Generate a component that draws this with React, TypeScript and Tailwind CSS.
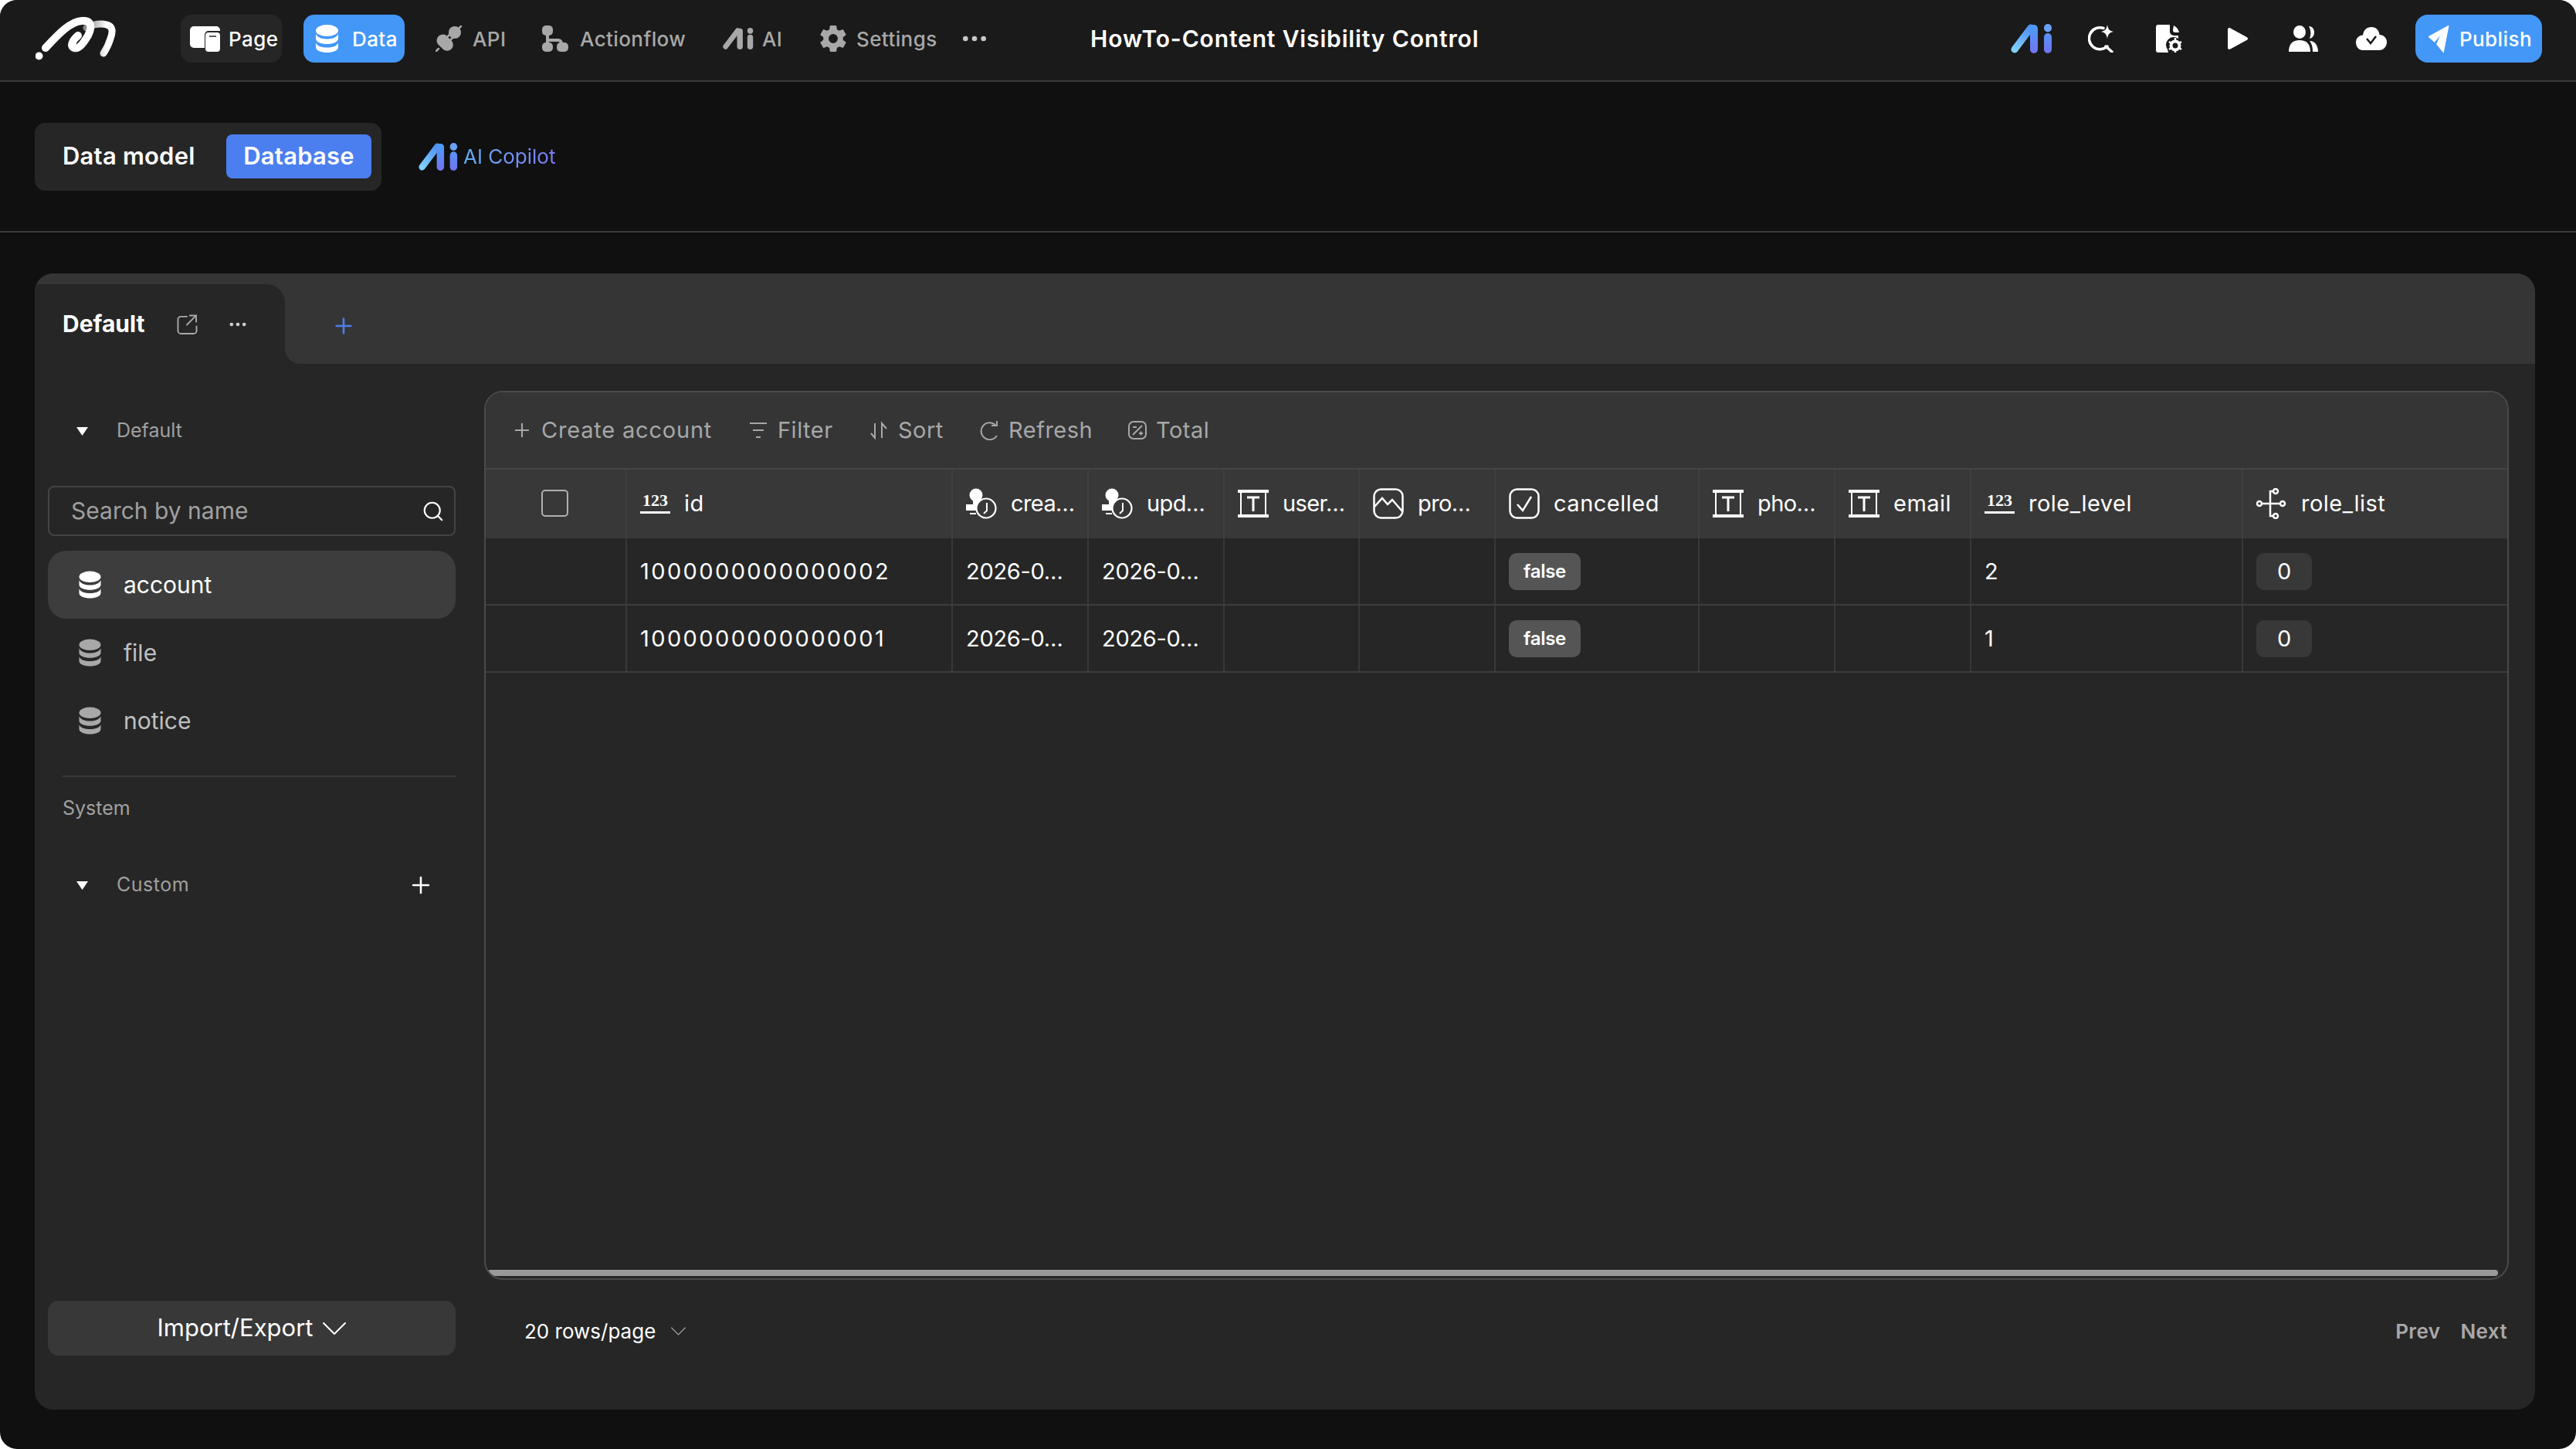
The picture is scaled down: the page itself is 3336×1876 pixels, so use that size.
import React from "react";
import { Plus, Ellipsis, Search } from "lucide-react";
import { IoSettingsSharp } from "react-icons/io5";

// drawn icons, sized from the outside
const DbIcon = ({ className }: { className: string }) => (
    <svg viewBox="0 0 30 36" className={className} fill="currentColor">
        <ellipse cx="15" cy="7.500" rx="14.5" ry="7.500" />
        <path d="M.5 12c2 4.500 8 6.500 14.500 6.500S27.500 16.500 29.500 12v6c0 4.500-7 7-14.500 7S.5 22.500.5 18z" />
        <path d="M.5 23.500c2 4.500 8 6 14.500 6s12.500-1.500 14.500-6V29c0 4.500-7 7-14.500 7S.5 33.500.5 29z" />
    </svg>
);

const AiLogo = ({ className, mono }: { className: string; mono?: boolean }) => (
    <svg viewBox="0 0 54 38" className={className} fill="none" strokeLinecap="round">
        <defs>
            <linearGradient id="aiLeft" gradientUnits="userSpaceOnUse" x1="5" y1="33" x2="26" y2="5">
                <stop offset="0" stopColor="#7fd0fa" />
                <stop offset="1" stopColor="#4f8ff5" />
            </linearGradient>
            <linearGradient id="aiRight" gradientUnits="userSpaceOnUse" x1="0" y1="5" x2="0" y2="33">
                <stop offset="0" stopColor="#4f9bf5" />
                <stop offset="1" stopColor="#6d78f2" />
            </linearGradient>
        </defs>
        <path d="M5 33 L26 5" stroke={mono ? "#a8a8a8" : "url(#aiLeft)"} strokeWidth="9" />
        <path d="M30 6 V33" stroke={mono ? "#a8a8a8" : "url(#aiRight)"} strokeWidth="10" />
        <path d="M48 5 V5.500" stroke={mono ? "#a8a8a8" : "#6aa0f6"} strokeWidth="10" />
        <path d="M48 17 V33" stroke={mono ? "#a8a8a8" : "url(#aiRight)"} strokeWidth="10" />
    </svg>
);

const Logo = () => (
    <svg viewBox="0 0 104 56" className="w-[104px] h-[56px]" fill="none" stroke="#fff" strokeLinecap="round">
        <defs>
            <linearGradient id="archFade" gradientUnits="userSpaceOnUse" x1="66" y1="0" x2="92" y2="0">
                <stop offset="0" stopColor="#8a8a8a" />
                <stop offset="1" stopColor="#fff" />
            </linearGradient>
        </defs>
        <circle cx="4.500" cy="50.500" r="5" fill="#fff" stroke="none" />
        <path d="M66 14 C74 10 84 8 92 10 C101 12 100 20 97 28 C95 35 92 41 88 47" stroke="url(#archFade)" strokeWidth="9" />
        <path d="M13 40 C28 24 44 6 60 5 C72 4 74 12 68 24 C62 34 56 42 50 40 C44 38 48 30 55 24" strokeWidth="10" />
    </svg>
);

const PageIcon = () => (
    <svg viewBox="0 0 39 33" className="w-[39px] h-[33px]" fill="#fff">
        <path d="M5 0h29a5 5 0 0 1 5 5v1H24a5 5 0 0 0-5 5v17H5a5 5 0 0 1-5-5V5a5 5 0 0 1 5-5z" />
        <path d="M24 8h11a4 4 0 0 1 4 4v17a4 4 0 0 1-4 4H24a4 4 0 0 1-4-4V12a4 4 0 0 1 4-4z" />
        <path d="M25 13h9" stroke="#262626" strokeWidth="1.500" />
    </svg>
);

const PlugIcon = () => (
    <svg viewBox="0 0 34 34" className="w-[34px] h-[34px]" fill="#a8a8a8" stroke="#a8a8a8">
        <circle cx="25" cy="9" r="8" stroke="none" />
        <path d="M29 5 L33 1" strokeWidth="2.500" strokeLinecap="round" />
        <path d="M14 13 L21 20 A7.500 7.500 0 0 1 9 30 L5 26 A7.500 7.500 0 0 1 14 13z" stroke="none" />
        <path d="M4 30 L1 33M15 15 L19 11M19 19 L23 15" strokeWidth="2.500" strokeLinecap="round" />
    </svg>
);

const FlowIcon = () => (
    <svg viewBox="0 0 34 34" className="w-[34px] h-[34px]" fill="#a8a8a8">
        <rect x="0" y="0" width="14" height="13" rx="5" />
        <rect x="5" y="12" width="4" height="12" />
        <path d="M7 17h14a6 6 0 0 1 6 6v2h-4v-2a2 2 0 0 0-2-2H7z" />
        <rect x="0" y="22" width="14" height="12" rx="5" />
        <rect x="19" y="22" width="15" height="12" rx="5" />
    </svg>
);

const SparkSearch = () => (
    <svg viewBox="0 0 34 36" className="w-[34px] h-[36px]" fill="none" stroke="#fff">
        <path d="M20 4.500 A14 14 0 1 0 25 28" strokeWidth="3.500" strokeLinecap="round" />
        <path d="M23 28 L31 35" strokeWidth="3.500" strokeLinecap="round" />
        <path d="M25 0 C26 6 28 8 33 9 C28 10 26 12 25 18 C24 12 22 10 17 9 C22 8 24 6 25 0z" fill="#fff" stroke="none" />
    </svg>
);

const FileGear = () => (
    <svg viewBox="0 0 34 36" className="w-[34px] h-[36px]" fill="#fff">
        <path d="M3 0h15v9a5 5 0 0 0 5 5h6v4a10 10 0 0 0-14 14l1 4H3a3 3 0 0 1-3-3V3a3 3 0 0 1 3-3z" />
        <path d="M23 1c4 2 6 5 7 9h-5a3 3 0 0 1-3-3z" />
        <circle cx="25" cy="27" r="5.500" fill="none" stroke="#fff" strokeWidth="4" />
        <path d="M25 17v4M25 33v3M17 22l3 2M30 30l3 2M17 32l3-2M30 24l3-2" stroke="#fff" strokeWidth="2.500" />
    </svg>
);

const PlayIcon = () => (
    <svg viewBox="0 0 28 30" className="w-[28px] h-[30px]" fill="#fff" stroke="#fff" strokeWidth="4" strokeLinejoin="round">
        <path d="M3 3 L25 15 L3 27z" />
    </svg>
);

const UsersIcon = () => (
    <svg viewBox="0 0 38 34" className="w-[38px] h-[34px]" fill="#fff">
        <ellipse cx="14" cy="8.500" rx="8" ry="8.500" />
        <path d="M26 1c5 0 7 4 7 8s-2 7-6 8c2-5 2-11-1-16z" />
        <path d="M0 34c0-10 5-15 14-15s14 5 14 15z" />
        <path d="M27 20c7 0 11 6 11 14h-7c0-6-1-10-4-14z" />
    </svg>
);

const CloudCheck = () => (
    <svg viewBox="0 0 40 30" className="w-[40px] h-[30px]">
        <path fill="#fff" d="M20 0c6 0 10 4 10.500 10 5 0 9.500 4 9.500 9.500S36 30 30 30H9c-5 0-9-4-9-10s4-9 9-9.500C10 4 14 0 20 0z" />
        <path d="M14 15l5 6 7-9" fill="none" stroke="#1a1a1a" strokeWidth="2.500" />
    </svg>
);

const PublishIcon = () => (
    <svg viewBox="0 0 28 36" className="w-[27px] h-[35px]" fill="#fff">
        <path d="M27 0 L0 15 L8 22 L17 11 L11 25 L20 36z" stroke="#fff" strokeWidth="1" strokeLinejoin="round" />
    </svg>
);

const ExternalIcon = () => (
    <svg viewBox="0 0 27 27" className="w-[27px] h-[26px]" fill="none" stroke="#a8a8a8" strokeWidth="2" strokeLinecap="round">
        <path d="M13 3H5a4 4 0 0 0-4 4v15a4 4 0 0 0 4 4h17a4 4 0 0 0 4-4v-6" />
        <path d="M13 14 L25 2 M17 1.500h8.500V10" />
    </svg>
);

const Chevron = ({ className }: { className: string }) => (
    <svg viewBox="0 0 30 16" className={className} fill="none" stroke="currentColor" strokeWidth="2" strokeLinecap="round">
        <path d="M1 1 L15 15 L29 1" />
    </svg>
);

const FilterIcon = () => (
    <svg viewBox="0 0 24 24" className="w-[24px] h-[24px]" fill="none" stroke="#a8a8a8" strokeWidth="2">
        <path d="M1 3h22M5 12h14M9 21h6" />
    </svg>
);

const SortIcon = () => (
    <svg viewBox="0 0 24 24" className="w-[24px] h-[24px]" fill="none" stroke="#a8a8a8" strokeWidth="2">
        <path d="M7 3v19l-5-6M16 22V3l6 7" />
    </svg>
);

const RefreshIcon = () => (
    <svg viewBox="0 0 24 26" className="w-[24px] h-[26px]" fill="none" stroke="#a8a8a8" strokeWidth="2">
        <path d="M20 6A11 11 0 1 0 22 20" />
        <path d="M15 7h7V1" />
    </svg>
);

const TotalIcon = () => (
    <svg viewBox="0 0 24 24" className="w-[24px] h-[24px]" fill="none" stroke="#a8a8a8" strokeWidth="2">
        <rect x="1" y="1" width="22" height="22" rx="6" />
        <path d="M6 18 L18 6M6 8h5M14 16h5M16.500 13.500v5" />
    </svg>
);

const TimeIcon = () => (
    <svg viewBox="0 0 40 40" className="w-[40px] h-[40px] shrink-0" fill="none" stroke="#fff">
        <circle cx="13" cy="9" r="8.500" fill="#fff" stroke="none" />
        <path d="M9 15h9v6h-3v8H0v-8h9z" fill="#fff" stroke="none" />
        <rect x="5" y="32" width="8" height="2" fill="#fff" stroke="none" />
        <circle cx="26" cy="26" r="12.500" fill="#383838" strokeWidth="2.200" />
        <path d="M27 19v10l-4 4" strokeWidth="2" />
    </svg>
);

const TextIcon = () => (
    <svg viewBox="0 0 40 40" className="w-[40px] h-[40px] shrink-0" fill="none" stroke="#fff" strokeWidth="2">
        <path d="M0 4h40M0 36h40" strokeWidth="4" />
        <path d="M4 4v32M36 4v32" />
        <path d="M12 12h16M20 12v18" strokeWidth="3" />
    </svg>
);

const ImageIcon = () => (
    <svg viewBox="0 0 40 40" className="w-[40px] h-[40px] shrink-0" fill="none" stroke="#fff" strokeWidth="2.500">
        <rect x="1.500" y="1.500" width="37" height="37" rx="9" />
        <path d="M2 24 L12 13 L19 21 L25 15 L38 30" />
    </svg>
);

const CheckIcon = () => (
    <svg viewBox="0 0 40 40" className="w-[40px] h-[40px] shrink-0" fill="none" stroke="#fff" strokeWidth="2.500">
        <rect x="1.500" y="1.500" width="37" height="37" rx="9" />
        <path d="M11 21 L18 29 L29 11" />
    </svg>
);

const LinkIcon = () => (
    <svg viewBox="0 0 40 40" className="w-[40px] h-[40px] shrink-0" fill="none" stroke="#fff" strokeWidth="2.500">
        <circle cx="4" cy="20" r="3" />
        <circle cx="25" cy="4" r="3" />
        <circle cx="25" cy="36" r="3" />
        <circle cx="34" cy="20" r="3" />
        <path d="M7 20h24M22 4h-4v32h4" />
    </svg>
);

const NumIcon = () => (
    <span className="flex flex-col items-center w-[39px] shrink-0">
        <span className="font-['Liberation_Serif',serif] font-bold text-[22px] leading-[20px] tracking-normal text-white">123</span>
        <span className="block w-[39px] h-[3px] mt-[4px] bg-white" />
    </span>
);

const Triangle = () => (
    <svg viewBox="0 0 15 11" className="w-[15px] h-[11px]" fill="#fff">
        <path d="M0 0h15L7.500 11z" />
    </svg>
);

const columns = [
    { label: "", icon: null },
    { label: "id", icon: <NumIcon /> },
    { label: "crea…", icon: <TimeIcon /> },
    { label: "upd…", icon: <TimeIcon /> },
    { label: "user…", icon: <TextIcon /> },
    { label: "pro…", icon: <ImageIcon /> },
    { label: "cancelled", icon: <CheckIcon /> },
    { label: "pho…", icon: <TextIcon /> },
    { label: "email", icon: <TextIcon /> },
    { label: "role_level", icon: <NumIcon /> },
    { label: "role_list", icon: <LinkIcon /> },
];

const rows = [
    { id: "1000000000000002", level: "2" },
    { id: "1000000000000001", level: "1" },
];

const gridCols = "grid grid-cols-[183px_422px_176px_176px_175px_176px_264px_176px_176px_352px_342px]";

const Cell = ({ children, last }: { children?: React.ReactNode; last?: boolean }) => (
    <div className={`flex items-center pl-[17px] pt-[1px] text-white text-[29px] tracking-[-0.3px] ${last ? "" : "border-r-2 border-[#383838]"}`}>
        {children}
    </div>
);

const Badge = ({ children }: { children: React.ReactNode }) => (
    <span className="flex items-center justify-center w-[93px] h-[48px] rounded-[10px] bg-[#555] text-white text-[24px] font-semibold">
        {children}
    </span>
);

export default function App() {
    return (
        <div className="w-[3336px] h-[1876px] bg-white">
            <div className="w-full h-full flex flex-col rounded-[22px] overflow-hidden bg-[#101010] font-['Inter',sans-serif] text-white">
                {/* top nav */}
                <header className="h-[106px] shrink-0 flex items-center pb-[4px] bg-[#1a1a1a] border-b-2 border-[#3a3a3a] text-[26px] font-medium tracking-[0.4px]">
                    <div className="ml-[46px] mr-[84px]">
                        <Logo />
                    </div>
                    <div className="w-[131px] h-[62px] flex items-center gap-[11px] pl-[12px] rounded-[14px] bg-[#262626]">
                        <PageIcon />
                        Page
                    </div>
                    <div className="ml-[28px] w-[131px] h-[62px] flex items-center gap-[16px] pl-[14px] rounded-[14px] bg-[#4397f7]">
                        <DbIcon className="w-[33px] h-[36px] text-white" />
                        Data
                    </div>
                    <div className="ml-[40px] w-[98px] flex items-center gap-[14px] text-[#a8a8a8]">
                        <PlugIcon />
                        API
                    </div>
                    <div className="ml-[40px] w-[188px] flex items-center gap-[15px] text-[#a8a8a8]">
                        <FlowIcon />
                        Actionflow
                    </div>
                    <div className="ml-[46px] w-[78px] flex items-center gap-[11px] text-[#a8a8a8]">
                        <AiLogo className="w-[40px] h-[30px]" mono />
                        AI
                    </div>
                    <div className="ml-[46px] w-[158px] flex items-center gap-[11px] text-[#a8a8a8]">
                        <IoSettingsSharp className="w-[38px] h-[38px]" />
                        Settings
                    </div>
                    <Ellipsis className="ml-[24px] w-[40px] h-[40px] text-[#c8c8c8]" strokeWidth={2} />
                    <div className="ml-[130px] text-[30px] font-semibold tracking-[0.85px] whitespace-nowrap">
                        HowTo-Content Visibility Control
                    </div>
                    <div className="ml-auto flex items-center">
                        <AiLogo className="w-[54px] h-[38px]" />
                        <div className="ml-[46px]">
                            <SparkSearch />
                        </div>
                        <div className="ml-[54px]">
                            <FileGear />
                        </div>
                        <div className="ml-[58px]">
                            <PlayIcon />
                        </div>
                        <div className="ml-[52px]">
                            <UsersIcon />
                        </div>
                        <div className="ml-[49px]">
                            <CloudCheck />
                        </div>
                        <div className="ml-[37px] mr-[44px] w-[164px] h-[62px] flex items-center gap-[13px] pl-[17px] rounded-[16px] bg-[#4397f7]">
                            <PublishIcon />
                            Publish
                        </div>
                    </div>
                </header>

                {/* data model / database switch */}
                <div className="h-[195px] shrink-0 flex items-center border-b-2 border-[#3a3a3a]">
                    <div className="ml-[45px] w-[449px] h-[88px] flex items-center rounded-[14px] bg-[#262626] text-[31px] font-semibold tracking-[0.2px]">
                        <span className="ml-[36px] w-[212px]">Data model</span>
                        <span className="w-[188px] h-[57px] flex items-center justify-center rounded-[8px] bg-[#4b7ff0]">Database</span>
                    </div>
                    <div className="ml-[47px] flex items-center gap-[6px]">
                        <AiLogo className="w-[53px] h-[36px]" />
                        <span className="text-[26px] bg-gradient-to-r from-[#5fb0f8] to-[#7c7cf5] bg-clip-text text-transparent">AI Copilot</span>
                    </div>
                </div>

                {/* main card */}
                <div className="ml-[45px] mt-[53px] w-[3238px] h-[1471px] flex flex-col rounded-[24px] overflow-hidden bg-[#262626]">
                    <div className="h-[117px] shrink-0 flex">
                        <div className="w-[324px] flex flex-col bg-[#353535]">
                            <div className="h-[14px]" />
                            <div className="flex-1 flex items-center rounded-tr-[24px] bg-[#262626] pl-[36px]">
                                <span className="w-[148px] text-[30px] font-bold">Default</span>
                                <ExternalIcon />
                                <Ellipsis className="ml-[38px] w-[28px] h-[28px] text-[#d0d0d0]" strokeWidth={2} />
                            </div>
                        </div>
                        <div className="flex-1 flex items-center rounded-bl-[20px] bg-[#353535] pl-[60px] pt-[18px]">
                            <Plus className="w-[32px] h-[32px] text-[#4f7de8]" strokeWidth={2} />
                        </div>
                    </div>

                    <div className="flex-1 flex pt-[35px]">
                        {/* sidebar */}
                        <aside className="ml-[17px] w-[528px] flex flex-col shrink-0 pb-[70px]">
                            <div className="h-[104px] flex items-center pl-[37px] gap-[37px] text-[25px] text-[#a0a0a0]">
                                <Triangle />
                                Default
                            </div>
                            <div className="mt-[19px] h-[65px] flex items-center justify-between pl-[28px] pr-[12px] rounded-[8px] border-2 border-[#444] text-[30px] text-[#a0a0a0]">
                                Search by name
                                <Search className="w-[30px] h-[30px] text-white" strokeWidth={1.700} />
                            </div>
                            <div className="mt-[19px] h-[88px] flex items-center gap-[29px] pl-[40px] rounded-[24px] bg-[#3d3d3d] text-[30px]">
                                <DbIcon className="w-[29px] h-[36px] text-white" />
                                account
                            </div>
                            {["file", "notice"].map((t) => (
                                <div key={t} className="h-[88px] flex items-center gap-[29px] pl-[40px] text-[30px] text-[#c0c0c0]">
                                    <DbIcon className="w-[29px] h-[36px] text-[#a8a8a8]" />
                                    {t}
                                </div>
                            ))}
                            <div className="mt-[27px] ml-[19px] h-[2px] bg-[#3a3a3a]" />
                            <div className="h-[82px] flex items-center pl-[19px] text-[25px] text-[#a0a0a0]">System</div>
                            <div className="mt-[18px] h-[80px] flex items-center pl-[37px] gap-[37px] text-[25px] tracking-[0.5px] text-[#a0a0a0]">
                                <Triangle />
                                <span className="flex-1">Custom</span>
                                <Plus className="mr-[28px] w-[34px] h-[34px] text-white" strokeWidth={1.800} />
                            </div>
                            <div className="mt-auto h-[71px] flex items-center justify-center gap-[13px] rounded-[14px] bg-[#383838] text-[31px]">
                                Import/Export
                                <Chevron className="w-[30px] h-[16px] text-white" />
                            </div>
                        </aside>

                        {/* table */}
                        <div className="ml-[37px] w-[2622px] flex flex-col">
                            <div className="h-[1151px] flex flex-col rounded-[24px] border-2 border-[#4a4a4a] overflow-hidden">
                                <div className="h-[100px] shrink-0 flex items-center pl-[33px] bg-[#353535] border-b-2 border-[#454545] text-[29px] tracking-[0.5px] text-[#a8a8a8]">
                                    <Plus className="w-[28px] h-[28px]" strokeWidth={1.800} />
                                    <span className="ml-[11px] w-[220px] whitespace-nowrap tracking-[0.8px]">Create account</span>
                                    <span className="ml-[49px]"><FilterIcon /></span>
                                    <span className="ml-[13px] w-[71px]">Filter</span>
                                    <span className="ml-[48px]"><SortIcon /></span>
                                    <span className="ml-[13px] w-[58px]">Sort</span>
                                    <span className="ml-[48px]"><RefreshIcon /></span>
                                    <span className="ml-[13px] w-[106px]">Refresh</span>
                                    <span className="ml-[49px]"><TotalIcon /></span>
                                    <span className="ml-[12px]">Total</span>
                                </div>
                                <div className={`${gridCols} h-[89px] shrink-0 bg-[#383838]`}>
                                    {columns.map((c, i) => (
                                        <div
                                            key={i}
                                            className={`flex items-center gap-[18px] pl-[17px] pb-[2px] text-[29px] whitespace-nowrap ${c.label.endsWith("…") ? "tracking-[-0.6px]" : "tracking-[0.5px]"} ${i < 10 ? "border-r-2 border-[#3f3f3f]" : ""}`}
                                        >
                                            {i === 0 ? (
                                                <span className="ml-[55px] w-[35px] h-[35px] rounded-[5px] border-2 border-[#b0b0b0]" />
                                            ) : (
                                                <>
                                                    {c.icon}
                                                    {c.label}
                                                </>
                                            )}
                                        </div>
                                    ))}
                                </div>
                                {rows.map((r) => (
                                    <div key={r.id} className={`${gridCols} h-[87px] shrink-0 border-b-2 border-[#3d3d3d]`}>
                                        <Cell />
                                        <Cell><span className="tracking-[2.4px]">{r.id}</span></Cell>
                                        <Cell>2026-0…</Cell>
                                        <Cell>2026-0…</Cell>
                                        <Cell />
                                        <Cell />
                                        <Cell><Badge>false</Badge></Cell>
                                        <Cell />
                                        <Cell />
                                        <Cell>{r.level}</Cell>
                                        <Cell last>
                                            <span className="flex items-center justify-center w-[72px] h-[48px] rounded-[10px] bg-[#383838]">0</span>
                                        </Cell>
                                    </div>
                                ))}
                                <div className="flex-1 flex flex-col justify-end">
                                    <div className="ml-[2px] mr-[12px] mb-[3px] h-[8px] rounded-full bg-[#999]" />
                                </div>
                            </div>
                            <div className="mt-[46px] h-[40px] flex items-center pl-[52px] pr-[2px] text-[26px]">
                                <span>20 rows/page</span>
                                <Chevron className="ml-[20px] w-[19px] h-[11px] text-[#a0a0a0]" />
                                <span className="ml-auto font-semibold text-[#a8a8a8] text-[26px] tracking-[0.4px]">Prev</span>
                                <span className="ml-[26px] font-semibold text-[#a8a8a8] text-[26px] tracking-[0.4px]">Next</span>
                            </div>
                        </div>
                    </div>
                </div>
            </div>
        </div>
    );
}
